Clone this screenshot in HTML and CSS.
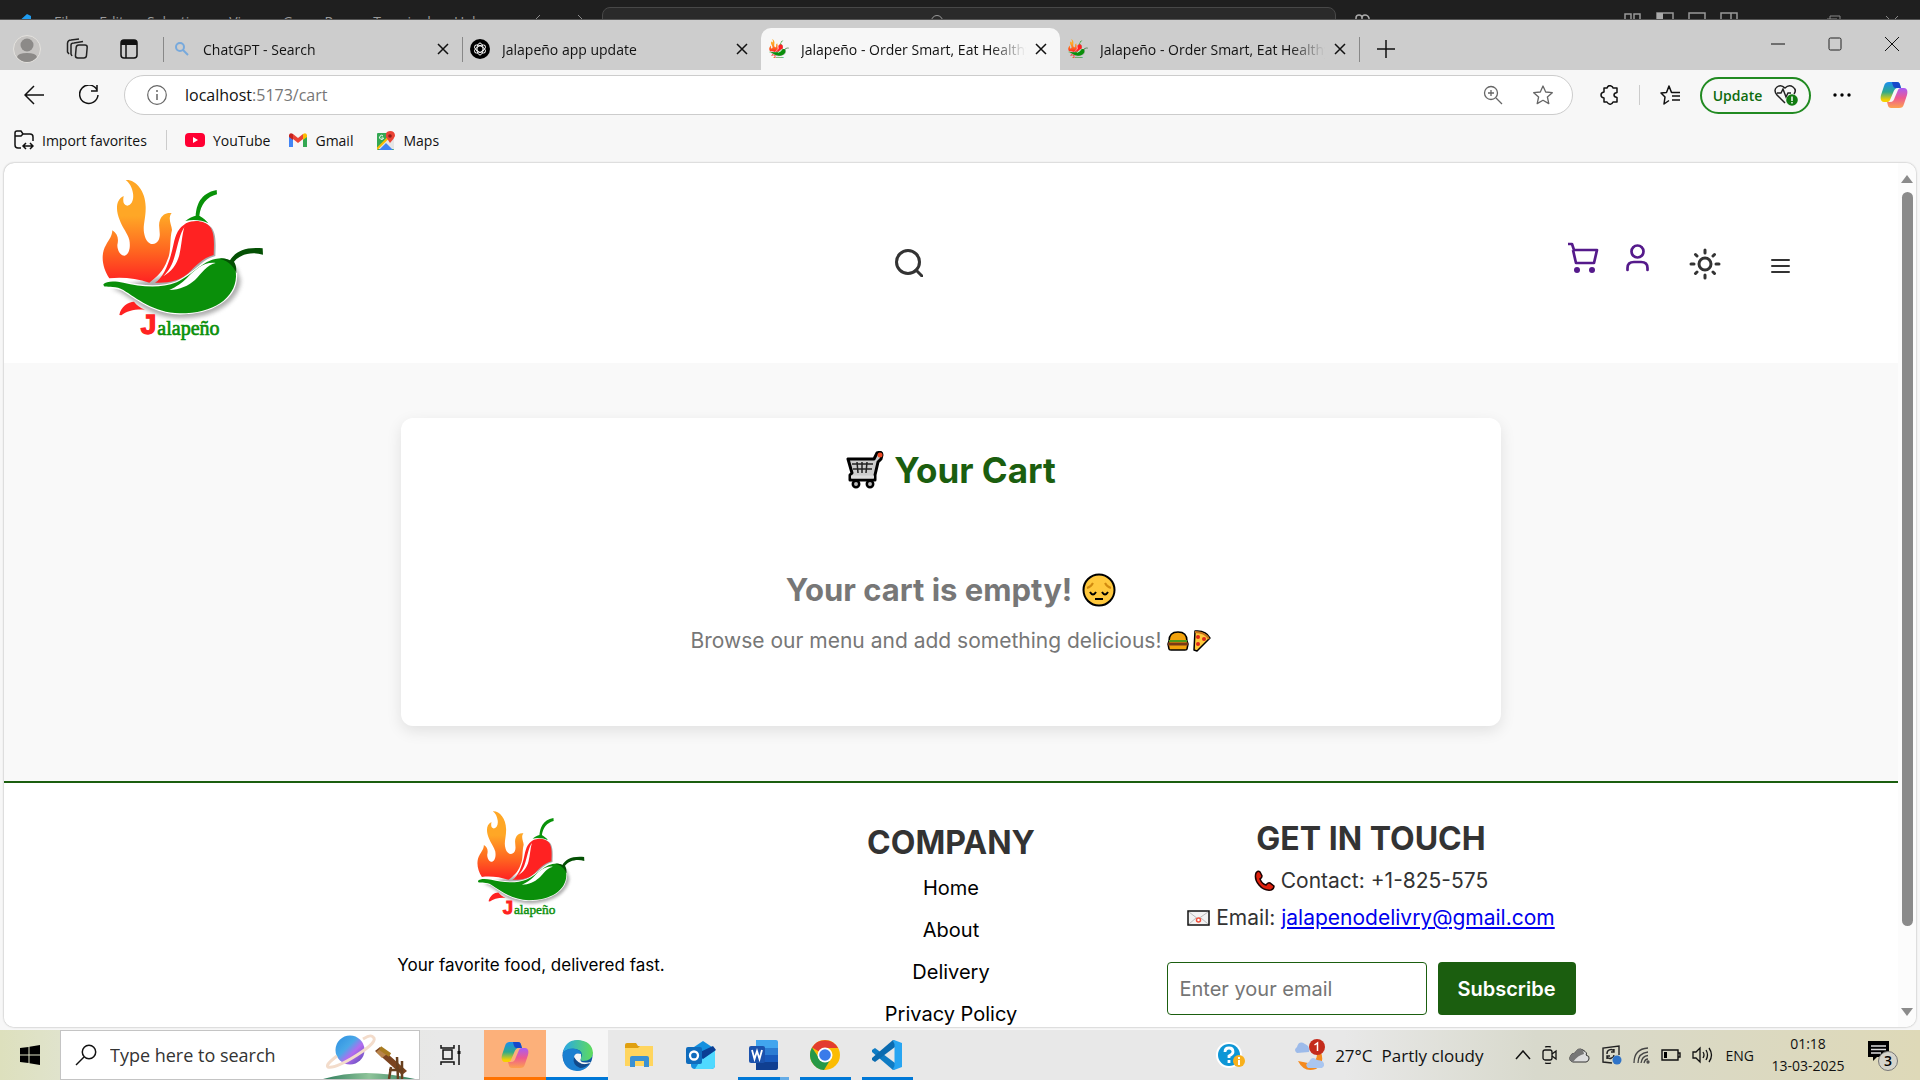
FILE: index.html
```html
<!DOCTYPE html>
<html lang="en">
<head>
<meta charset="utf-8">
<title>Jalapeño - Order Smart, Eat Healthy</title>
<link rel="stylesheet" href="styles.css">
</head>
<body>
<svg class="defs" width="0" height="0" aria-hidden="true">
  <defs>
    <linearGradient id="flame" x1="0" y1="0" x2="0" y2="1"><stop offset="0.35" stop-color="#ffa726"/><stop offset="0.7" stop-color="#ff6420"/><stop offset="1" stop-color="#ff2222"/></linearGradient>
    <filter id="soft" x="-20%" y="-20%" width="140%" height="140%"><feGaussianBlur stdDeviation="6"/></filter>
    <linearGradient id="cpA" x1="0" y1="0" x2="0" y2="1"><stop offset="0" stop-color="#1a8df0"/><stop offset="0.5" stop-color="#2fa98c"/><stop offset="0.9" stop-color="#f5d000"/></linearGradient>
    <linearGradient id="cpB" x1="0" y1="0" x2="0" y2="1"><stop offset="0" stop-color="#a85cf5"/><stop offset="0.5" stop-color="#ee5a90"/><stop offset="1" stop-color="#fda24f"/></linearGradient>
    <linearGradient id="edgeA" x1="0" y1="0" x2="1" y2="0"><stop offset="0" stop-color="#2aa7e8"/><stop offset="1" stop-color="#5fdc5a"/></linearGradient>
    <linearGradient id="planet" x1="0" y1="0" x2="1" y2="1"><stop offset="0" stop-color="#2b8fe0"/><stop offset="0.4" stop-color="#4aa8e8"/><stop offset="0.6" stop-color="#b26cf0"/><stop offset="1" stop-color="#5648b0"/></linearGradient>
    <linearGradient id="hill" x1="0" y1="0" x2="1" y2="0"><stop offset="0" stop-color="#2f7d5c"/><stop offset="0.5" stop-color="#8fc49a"/><stop offset="1" stop-color="#2f7d5c"/></linearGradient>
  </defs>
  <symbol id="logo" viewBox="66 36 486 492">
    <path d="M95 372C150 380 180 455 300 460C410 460 480 405 482 345L470 310L380 300Z" fill="#777" opacity=".6" filter="url(#soft)"/>
    <path d="M137 45C165 42 196 75 197 125C198 165 185 185 195 215C203 240 225 245 236 225C245 205 232 185 240 165C245 150 258 142 275 144C262 160 275 180 276 195C268 225 275 260 262 285C250 320 230 335 208 353C170 340 125 335 88 340C68 310 60 270 78 240C88 222 96 215 97 196C112 205 117 220 112 240C112 258 122 273 134 272C148 268 152 245 148 225C143 205 128 190 119 165C108 140 105 105 131 93C128 110 130 120 142 122C155 120 162 105 159 85C156 68 150 55 137 45Z" fill="url(#flame)"/>
    <path d="M323 178C350 165 380 171 395 188C410 208 407 245 406 273C370 283 350 308 330 328Z" fill="#aaa"/>
    <path d="M318 175C345 162 375 168 390 185C405 205 402 240 401 270C365 280 345 305 325 325C300 348 265 355 225 353C250 340 270 290 280 240C288 205 295 190 318 175Z" fill="#ff2222"/>
    <path d="M313 187C300 205 295 235 285 270C277 300 268 315 250 334C275 318 290 300 298 270C305 240 306 210 313 187Z" fill="#fff"/>
    <path d="M316 168C328 158 338 155 347 152C350 120 360 85 410 75L411 88C380 95 362 120 358 152C370 160 378 165 385 175C365 165 340 163 316 168Z" fill="#099209"/>
    <path d="M118 450C122 425 145 410 162 410C170 420 180 428 195 434C165 432 140 438 124 451Z" fill="#ff2222"/>
    <path d="M70 358C80 347 105 348 130 353C180 365 240 372 290 352C340 330 370 280 425 280C455 282 470 305 468 335C465 400 400 445 300 445C220 443 170 400 130 375C110 363 85 368 72 364Z" fill="#0a8f0a" stroke="#fff" stroke-width="7" paint-order="stroke"/>
    <path d="M407 294C370 290 345 315 320 340C305 355 290 365 268 375C300 375 325 362 345 345C365 325 380 300 407 294Z" fill="#fff"/>
    <path d="M418 282C435 278 445 284 450 286C465 262 490 245 548 250L549 269C515 258 480 268 462 290C468 300 470 310 469 325C460 300 440 285 418 282Z" fill="#045004"/>
    <text x="182" y="507" class="logo-j">J</text>
    <text x="232" y="509" class="logo-rest">alapeño</text>
  </symbol>
  <symbol id="x" viewBox="0 0 12 12"><path d="M1 1L11 11M11 1L1 11" stroke="#111" stroke-width="1.5" fill="none"/></symbol>
  <symbol id="copilot" viewBox="0 0 28 28">
    <path d="M9 1H17C20 1 20 4 21 7H18C15 7 14 9 13 12L10 19C9 21 8 21 6 21H4C1 21 0 18 1 14L4 5C5 2 6 1 9 1Z" fill="url(#cpA)"/>
    <path d="M12 1H17C20 1 20 4 21 7H16C14 7 13 6 12 1Z" fill="#1747c9"/>
    <path d="M19 27H11C8 27 8 24 7 21H10C13 21 14 19 15 16L18 9C19 7 20 7 22 7H24C27 7 28 10 27 14L24 23C23 26 22 27 19 27Z" fill="url(#cpB)"/>
  </symbol>
</svg>

<div class="editor">
  <svg width="20" height="20" viewBox="0 0 20 20"><path d="M15 0L19 2V18L15 20L5 11L2 14L0 13V7L2 6L5 9Z" fill="#1f9cf0"/></svg>
  <nav class="editor-menu"><span>File</span><span>Edit</span><span>Selection</span><span>View</span><span>Go</span><span>Run</span><span>Terminal</span><span>Help</span></nav>
  <svg class="editor-nav" width="54" height="14" viewBox="0 0 54 14"><path d="M8 1L2 7L8 13M2 7H16M46 1L52 7L46 13M52 7H38" stroke="#8a8a8a" fill="none"/></svg>
  <div class="editor-search"><svg width="14" height="14" viewBox="0 0 14 14"><circle cx="7" cy="6" r="5.500" fill="none" stroke="#999"/></svg><span>jalapeno</span></div>
  <svg class="editor-copilot" width="34" height="14" viewBox="0 0 34 14"><path d="M2 9V4Q2 1 5 1T8 4V7M8 7V4Q8 1 11 1T15 4V9M26 7L30 11L34 7" stroke="#aaa" stroke-width="1.500" fill="none"/></svg>
  <svg class="editor-layout" width="116" height="16" viewBox="0 0 116 16"><path d="M1 2H7V9H1ZM10 2H16V9H10ZM33 1H49V14H33ZM65 1H81V14H65ZM97 1H113V14H97ZM107 1V14" stroke="#999" fill="none" stroke-width="1.500"/><path d="M33 1H39V14H33Z" fill="#aaa"/></svg>
  <svg class="editor-window" width="74" height="14" viewBox="0 0 74 14"><path d="M1 14V5H11V14M4 5V2H14V12M60 2L72 14M72 2L60 14" stroke="#888" fill="none"/></svg>
</div>

<div class="browser">
  <div class="tabbar">
    <div class="tab-tools">
      <svg width="28" height="28" viewBox="0 0 28 28"><circle cx="14" cy="14" r="13.500" fill="#c6c4c2" stroke="#e4e2de"/><circle cx="14" cy="10" r="6.500" fill="#8c8a88"/><path d="M4 22Q5 18 14 18T24 22Q20 27 14 27T4 22Z" fill="#8c8a88"/></svg>
      <svg width="22" height="22" viewBox="0 0 22 22" fill="none" stroke="#222" stroke-width="1.500"><rect x="9" y="7" width="11" height="13" rx="2.500" transform="skewX(-5) translate(2 0)"/><path d="M6 18L5 16V7Q5 5 8 5L17 3.500M3 16L1.500 14V5Q2 2 5 2L13 1"/></svg>
      <svg class="tab-panel" width="18" height="20" viewBox="0 0 18 20"><rect x="1" y="1" width="16" height="18" rx="3" fill="none" stroke="#111" stroke-width="1.500"/><path d="M1 6V4Q1 1 4 1H14Q17 1 17 4V6Z" fill="#111"/><path d="M6 6V19" stroke="#111" stroke-width="1.500"/></svg>
    </div>
    <div class="tab tab-line">
      <svg class="fav" width="20" height="20" viewBox="0 0 20 20"><circle cx="9" cy="8" r="4" fill="none" stroke="#77a9dc" stroke-width="2"/><path d="M12 11L17 16" stroke="#77a9dc" stroke-width="2"/></svg>
      <span class="tab-title">ChatGPT - Search</span><button class="close" aria-label="Close tab"><svg width="12" height="12"><use href="#x"/></svg></button>
    </div>
    <div class="tab tab-line">
      <svg class="fav" width="20" height="20" viewBox="0 0 20 20"><circle cx="10" cy="10" r="10" fill="#000"/><g fill="none" stroke="#fff"><ellipse cx="10" cy="10" rx="3" ry="6"/><ellipse cx="10" cy="10" rx="3" ry="6" transform="rotate(60 10 10)"/><ellipse cx="10" cy="10" rx="3" ry="6" transform="rotate(120 10 10)"/></g></svg>
      <span class="tab-title">Jalapeño app update</span><button class="close" aria-label="Close tab"><svg width="12" height="12"><use href="#x"/></svg></button>
    </div>
    <div class="tab tab-active">
      <svg class="fav" width="20" height="20"><use href="#logo"/></svg>
      <span class="tab-title">Jalapeño - Order Smart, Eat Healthy</span><button class="close" aria-label="Close tab"><svg width="12" height="12"><use href="#x"/></svg></button>
    </div>
    <div class="tab">
      <svg class="fav" width="20" height="20"><use href="#logo"/></svg>
      <span class="tab-title">Jalapeño - Order Smart, Eat Healthy</span><button class="close" aria-label="Close tab"><svg width="12" height="12"><use href="#x"/></svg></button>
    </div>
    <button class="new-tab" aria-label="New tab"><svg width="18" height="18" viewBox="0 0 18 18"><path d="M9 0V18M0 9H18" stroke="#111" stroke-width="1.500"/></svg></button>
    <div class="window-buttons">
      <button aria-label="Minimize"><svg width="14" height="14" viewBox="0 0 14 14"><path d="M0 7H14" stroke="#111"/></svg></button>
      <button aria-label="Maximize"><svg width="14" height="14" viewBox="0 0 14 14"><rect x="1" y="1" width="12" height="12" rx="1.500" fill="none" stroke="#222"/></svg></button>
      <button aria-label="Close"><svg width="14" height="14" viewBox="0 0 14 14"><path d="M0 0L14 14M14 0L0 14" stroke="#111"/></svg></button>
    </div>
  </div>

  <div class="toolbar">
    <button aria-label="Back"><svg width="20" height="20" viewBox="0 0 20 20"><path d="M10 1L1 10L10 19M1 10H20" fill="none" stroke="#111" stroke-width="1.500"/></svg></button>
    <button class="reload" aria-label="Reload"><svg width="20" height="20" viewBox="0 0 20 20"><path d="M18 5A9.200 9.200 0 1 0 19 10M18 0V6H12" fill="none" stroke="#111" stroke-width="1.500"/></svg></button>
    <div class="address">
      <svg width="20" height="20" viewBox="0 0 20 20"><circle cx="10" cy="10" r="9.300" fill="none" stroke="#666" stroke-width="1.200"/><path d="M10 9V15M10 5V7" stroke="#666" stroke-width="1.500"/></svg>
      <span class="url">localhost<span>:5173/cart</span></span>
      <svg width="20" height="20" viewBox="0 0 20 20" fill="none" stroke="#666" stroke-width="1.300"><circle cx="8" cy="8" r="6.500"/><path d="M13 13L19 19M8 5V11M5 8H11"/></svg>
      <svg class="star" width="20" height="20" viewBox="0 0 20 20" fill="none" stroke="#666" stroke-width="1.300" stroke-linejoin="round"><path d="M10 1L12.700 7L19.300 7.700L14.400 12L15.800 18.600L10 15.300L4.200 18.600L5.600 12L.7 7.700L7.300 7Z"/></svg>
    </div>
    <svg class="puzzle" width="20" height="20" viewBox="0 0 20 20" fill="none" stroke="#111" stroke-width="1.500" stroke-linejoin="round"><path d="M4 3H7Q8 0 10.500 0.800T13 3H17V7.500Q14 8 14 10T17 12.500V17H13Q12 19.500 10 19.200T7 17H4V13Q1 12.500 1 10T4 7Z"/></svg>
    <i class="rule"></i>
    <svg class="favs" width="20" height="20" viewBox="0 0 20 20" fill="none" stroke="#111" stroke-width="1.500" stroke-linejoin="round"><path d="M17 7.500H11.500L9 1L6.500 7.500L1 8L5 12L4 19L9 15.500M12 11H20M12 15H20M15 7.500H20"/></svg>
    <button class="update">Update <svg width="24" height="22" viewBox="0 0 24 22"><path d="M11 19L3 11Q-1 6 3 3Q7 0 11 4Q15 0 19 3Q23 6 20 10M3 9H7L9 5L12 13L14 9H17" fill="none" stroke="#222" stroke-width="1.500"/><circle cx="18" cy="16" r="5.800" fill="#107c10"/><path d="M18 12.500V17M18 18V19.500" stroke="#fff" stroke-width="1.500"/></svg></button>
    <button class="dots" aria-label="More"><svg width="18" height="4" viewBox="0 0 18 4"><circle cx="2" cy="2" r="1.700"/><circle cx="9" cy="2" r="1.700"/><circle cx="16" cy="2" r="1.700"/></svg></button>
    <button aria-label="Copilot"><svg width="28" height="28"><use href="#copilot"/></svg></button>
  </div>

  <div class="bookmarks">
    <a href="#"><svg width="20" height="20" viewBox="0 0 20 20" fill="none" stroke="#111" stroke-width="1.500"><path d="M7 18H4Q1 18 1 15V3Q1 1 3 1H7L9 4H16Q19 4 19 7V11M1 6H7L9 4M9 16H19M12 13L9 16L12 19M16 13L19 16L16 19"/></svg>Import favorites</a>
    <i class="rule"></i>
    <a href="#"><svg width="20" height="14" viewBox="0 0 20 14"><rect width="20" height="14" rx="4" fill="#ff0033"/><path d="M8 4L13 7L8 10Z" fill="#fff"/></svg>YouTube</a>
    <a href="#"><svg width="18" height="14" viewBox="0 0 18 14"><path d="M0 2V14H4V6Z" fill="#4285f4"/><path d="M18 2V14H14V6Z" fill="#34a853"/><path d="M4 1L9 5L14 1V6L9 10L4 6Z" fill="#ea4335"/><path d="M0 2Q1-1 4 1V7L0 4Z" fill="#c5221f"/><path d="M18 2Q17-1 14 1V7L18 4Z" fill="#fbbc04"/></svg>Gmail</a>
    <a href="#" class="maps"><svg width="18" height="19" viewBox="0 0 18 19"><rect y="2" width="17" height="17" rx="1" fill="#34a853"/><path d="M0 18L16 3L17 4V18Z" fill="#e6e6e6"/><path d="M2 19L9 12L16 19Z" fill="#4285f4"/><path d="M0 18L16 2" stroke="#fbbc04" stroke-width="2"/><path d="M6 5A2 2 0 1 0 6.500 7H4.500" fill="none" stroke="#fff"/><path d="M13 12L9 6Q8 0 13 0T18 5Q17 8 13 12Z" fill="#ea4335"/><circle cx="13" cy="5" r="1.800" fill="#8c1d18"/></svg>Maps</a>
  </div>

  <div class="viewport">
    <div class="page">
      <header class="site-header">
        <a href="#" aria-label="Jalapeño"><svg class="logo" width="162" height="164"><use href="#logo"/></svg></a>
        <button class="search" aria-label="Search"><svg width="28" height="28" viewBox="0 0 28 28" fill="none" stroke="#333" stroke-width="3"><circle cx="13" cy="13" r="11.500"/><path d="M21 21L27 27" stroke-linecap="round"/></svg></button>
        <nav class="actions">
          <a href="#" aria-label="Cart"><svg width="31" height="32" viewBox="0 0 31 32" fill="none" stroke="#551a8b" stroke-width="2.700" stroke-linejoin="round"><path d="M0 2H4L6 8H29L26 21H8L5 8"/><g fill="#551a8b" stroke="none"><circle cx="9" cy="28" r="3"/><circle cx="24" cy="28" r="3"/></g></svg></a>
          <a href="#" aria-label="Account"><svg width="23" height="28" viewBox="0 0 23 28" fill="none" stroke="#551a8b" stroke-width="2.700" stroke-linecap="round"><circle cx="11.500" cy="7.500" r="6"/><path d="M1.500 26V24Q1.500 18 8 18H15Q21.500 18 21.500 24V26"/></svg></a>
          <button class="theme" aria-label="Theme"><svg width="32" height="32" viewBox="0 0 32 32" fill="none" stroke="#333" stroke-width="3" stroke-linecap="round"><circle cx="16" cy="16" r="6"/><path d="M16 2V5M16 27V30M2 16H5M27 16H30M6.500 6.500L8 8M24 24L25.500 25.500M6.500 25.500L8 24M24 8L25.500 6.500"/></svg></button>
          <button class="menu" aria-label="Menu"><svg width="19" height="16" viewBox="0 0 19 16"><path d="M1 2H18M1 8H18M1 14H18" stroke="#333" stroke-width="2" stroke-linecap="round"/></svg></button>
        </nav>
      </header>

      <main>
        <section class="card">
          <h1><svg width="38" height="38" viewBox="0 0 38 38"><path d="M2 8H28L31 2Q36 0 36 4L35 8L32 11L29 24H29V29H4V24L6 22Z" fill="#ccc" stroke="#000" stroke-width="3" stroke-linejoin="round"/><path d="M6 13H27M7 18H26M11 11L12 22M16 11V22M21 11L20 22" stroke="#222" stroke-width="1.500"/><path d="M5 26H28" stroke="#ddd" stroke-width="3"/><circle cx="34" cy="4" r="2.500" fill="#f04a24"/><g fill="#bbb" stroke="#000" stroke-width="2.500"><circle cx="10" cy="33" r="3.200"/><circle cx="24" cy="33" r="3.200"/></g></svg>Your Cart</h1>
          <h2>Your cart is empty! <svg width="34" height="34" viewBox="0 0 34 34"><circle cx="17" cy="17" r="15.500" fill="#ffc83d" stroke="#000" stroke-width="2"/><path d="M5 15Q9 14 11 10M29 15Q25 14 23 10" fill="none" stroke="#d08a10" stroke-width="2"/><path d="M8 19Q11 24 14 19M20 19Q23 24 26 19M13 26H21" fill="none" stroke="#000" stroke-width="2"/></svg></h2>
          <p>Browse our menu and add something delicious! <svg width="22" height="20" viewBox="0 0 22 20"><path d="M2 10Q2 1 11 1T20 10L21 13L20 18Q20 19 18 19H4Q2 19 2 18L1 13Z" fill="#f2a20c" stroke="#000" stroke-width="1.500"/><path d="M2 10H20" stroke="#4c9a1a" stroke-width="2"/><path d="M1 13H21" stroke="#7a3a14" stroke-width="3"/></svg><svg class="pizza" width="18" height="22" viewBox="0 0 18 22"><path d="M2 1Q13 0 17 8L15 10L4 21L1 20Z" fill="#ffc93c" stroke="#000" stroke-width="1.500" stroke-linejoin="round"/><path d="M2 2Q12 2 16 9" fill="none" stroke="#c9731b" stroke-width="2"/><g fill="#e02818"><circle cx="5" cy="7" r="2"/><circle cx="11" cy="9" r="2"/><circle cx="5" cy="14" r="2"/></g></svg></p>
        </section>
      </main>

      <footer>
        <div class="footer-grid">
          <div class="brand"><svg width="108" height="110"><use href="#logo"/></svg><p>Your favorite food, delivered fast.</p></div>
          <div class="company"><h2>COMPANY</h2><a href="#">Home</a><a href="#">About</a><a href="#">Delivery</a><a href="#">Privacy Policy</a></div>
          <div class="touch">
            <h2>GET IN TOUCH</h2>
            <p><svg width="21" height="21" viewBox="0 0 21 21"><path d="M2 3Q4 0 6 2L8 6Q8 8 6 9Q8 14 12 15Q14 12 16 13L20 16Q20 19 17 20Q10 21 5 15T2 3Z" fill="#e0200c" stroke="#1c0000" stroke-width="1.500"/></svg>Contact: +1-825-575</p>
            <p><svg width="23" height="16" viewBox="0 0 23 16"><rect x="1" y="1" width="21" height="14" fill="#f2f2f2" stroke="#111" stroke-width="1.500"/><path d="M2 2L11 9L21 2M2 14L9 8M21 14L14 8" stroke="#bbb" fill="none"/><circle cx="11.500" cy="10" r="2" fill="#fff" stroke="#f0503c" stroke-width="1.500"/></svg>Email:&nbsp;<a href="#">jalapenodelivry@gmail.com</a></p>
            <form><input type="email" placeholder="Enter your email" aria-label="Email address"><button type="button">Subscribe</button></form>
          </div>
        </div>
      </footer>
    </div>
    <div class="scrollbar" aria-hidden="true"><i class="up"></i><i class="thumb"></i><i class="gap"></i><i class="down"></i></div>
  </div>
</div>

<div class="taskbar">
  <button class="start" aria-label="Start"><svg width="20" height="20" viewBox="0 0 20 20"><path d="M0 3L8.500 2V9.500H0ZM9.500 1.800L20 0V9.500H9.500ZM0 10.500H8.500V18L0 17ZM9.500 10.500H20V20L9.500 18.200Z"/></svg></button>
  <label class="task-search">
    <svg width="22" height="22" viewBox="0 0 22 22"><circle cx="14" cy="8" r="6.700" fill="none" stroke="#111" stroke-width="1.500"/><path d="M9 13L1 21" stroke="#111" stroke-width="1.500"/></svg>
    <input type="text" placeholder="Type here to search" aria-label="Type here to search">
    <svg class="scene" width="96" height="48" viewBox="0 0 96 48"><path d="M0 48Q40 36 92 48Z" fill="url(#hill)"/><circle cx="27" cy="19" r="14.500" fill="url(#planet)"/><path d="M14 25Q2 34 5 36Q12 38 34 24T50 6Q48 3 40 8" fill="none" stroke="#f3dccb" stroke-width="3"/><path d="M52 20L57 16L84 40L79 44Z" fill="#7b4420"/><path d="M53 21L58 17L64 23L59 27Z" fill="#b8834a"/><path d="M57 17L67 24" stroke="#a87b20" stroke-width="4"/><path d="M74 26L75 48M79 30V48M66 48L68 36M66 39H80" stroke="#69401f" stroke-width="2.500"/></svg>
  </label>
  <button class="tile" aria-label="Task view"><svg width="22" height="20" viewBox="0 0 22 20" fill="none" stroke="#111" stroke-width="1.500"><path d="M1 0V3H14V0M1 20V17H14V20M3 5H12V14H3ZM19 0V20"/><path d="M19 6V9" stroke-width="3"/></svg></button>
  <button class="tile orange" aria-label="Copilot"><svg width="28" height="28"><use href="#copilot"/></svg></button>
  <button class="tile current" aria-label="Edge"><svg width="31" height="31" viewBox="0 0 31 31"><circle cx="15.500" cy="15.500" r="15" fill="#0c59a4"/><path d="M1 13Q3 0 16 0Q30 1 31 13Q30 21 21 21Q18 21 19 18Q22 11 14 9Q5 8 1 13Z" fill="url(#edgeA)"/><path d="M1 13Q6 7 14 9Q20 11 19 15Q13 11 12 18Q12 27 27 25Q22 31 15 31Q0 30 1 13Z" fill="#1b7fd0"/><path d="M19 14Q12 12 12 18Q14 26 27 24L29 22Q16 24 19 18Z" fill="#f5f5f5"/><path d="M12 17Q10 25 18 28Q24 28 28 23Q18 27 12 17Z" fill="#114a8b"/></svg></button>
  <button class="tile" aria-label="Explorer"><svg width="28" height="24" viewBox="0 0 28 24"><path d="M0 2Q0 0 2 0H11L13 3H27V10H0Z" fill="#e0a010"/><path d="M0 5H13L15 3H28V23H0Z" fill="#ffd55e"/><path d="M5 24V15Q5 13 7 13H22Q24 13 24 15V24H19V18H10V24Z" fill="#3a91d4"/></svg></button>
  <button class="tile" aria-label="Outlook"><svg width="30" height="28" viewBox="0 0 30 28"><path d="M5 8L17 0L29 8V24Q29 28 25 28H9Q5 28 5 24Z" fill="#1490df"/><path d="M14 20L29 9V24Q29 28 25 28H9Z" fill="#50d9ff"/><path d="M12 12L27 5L30 9L17 18Z" fill="#0a3f94"/><rect y="6" width="16" height="17" rx="2" fill="#0f6cbd"/><circle cx="8" cy="14.500" r="4" fill="none" stroke="#fff" stroke-width="2.300"/></svg></button>
  <button class="tile running more" aria-label="Word"><svg width="29" height="30" viewBox="0 0 29 30"><path d="M7 0H27Q29 0 29 2V8H7Z" fill="#41a5ee"/><path d="M7 8H29V15H7Z" fill="#2b7cd3"/><path d="M7 15H29V22H7Z" fill="#185abd"/><path d="M7 22H29V28Q29 30 27 30H7Z" fill="#103f91"/><rect y="6" width="16" height="17" rx="2" fill="#1b52ad"/><path d="M3 10L5.500 19L8 11L10.500 19L13 10" fill="none" stroke="#fff" stroke-width="1.800"/></svg></button>
  <button class="tile running" aria-label="Chrome"><svg width="30" height="30" viewBox="0 0 30 30"><circle cx="15" cy="15" r="15" fill="#fbbc04"/><path d="M15 15L2 7.500A15 15 0 0 1 28 8H15Z" fill="#e33b2e"/><path d="M2 7.500A15 15 0 0 0 14 30L21 18.500L15 15L9 18Z" fill="#279847"/><circle cx="15" cy="15" r="7.500" fill="#fff"/><circle cx="15" cy="15" r="5.800" fill="#3a7bea"/></svg></button>
  <button class="tile running" aria-label="Code"><svg width="30" height="30" viewBox="0 0 30 30"><path d="M0 10L3 8L23 23V29L21 30L0 12Z" fill="#0f7cc4"/><path d="M0 20L3 22L23 7V1L21 0L0 18Z" fill="#0a6bb0"/><path d="M22 0L30 3V27L22 30L21 29L22.500 26V4L21 1Z" fill="#27a5f2"/></svg></button>

  <div class="tray">
    <svg width="30" height="30" viewBox="0 0 30 30"><circle cx="13" cy="15" r="13" fill="#fff"/><circle cx="13" cy="15" r="11" fill="#0d96d6"/><path d="M9 12Q9 8 13 8T17 12Q17 14 13 16V18M13 20V23" fill="none" stroke="#fff" stroke-width="2.800"/><circle cx="23" cy="21" r="6" fill="#f8b01c"/><path d="M23 17V19M23 20V25" stroke="#fff" stroke-width="2"/></svg>
    <div class="weather"><svg width="32" height="32" viewBox="0 0 32 32"><path d="M20 8Q28 22 14 24L4 22Q10 34 22 30Q32 24 26 11Z" fill="#f58a1f"/><path d="M3 14Q-1 11 3 8Q5 1 11 5Q16 7 15 13Z" fill="#9dbbea"/><path d="M14 29Q10 25 15 23Q18 16 23 21Q31 21 30 27L28 29Z" fill="#aac6f0"/><circle cx="23" cy="8" r="8" fill="#c42b1c"/><path d="M20.500 6L23.500 4V12" stroke="#fff" stroke-width="1.500" fill="none"/></svg><span>27°C</span><span class="condition">Partly cloudy</span></div>
    <div class="tray-icons">
      <svg width="16" height="10" viewBox="0 0 16 10"><path d="M1 9L8 1L15 9" fill="none" stroke="#111" stroke-width="1.500"/></svg>
      <svg width="16" height="18" viewBox="0 0 16 18" fill="none" stroke="#111" stroke-width="1.300"><rect x="1" y="4" width="9" height="10" rx="2"/><path d="M10 8L14 5V13L10 10M3 1Q6 0 9 1M3 17Q6 18 9 17"/></svg>
      <svg width="21" height="15" viewBox="0 0 21 15"><path d="M4 14Q0 13 1 9T6 5Q9-1 14 2T17 7Q21 8 20 11T17 14Z" fill="#ddd" stroke="#333"/><path d="M4 14Q0 13 1 9T6 5Q9-1 14 2L15 6Q9 7 4 14Z" fill="#777"/></svg>
      <svg width="21" height="20" viewBox="0 0 21 20"><path d="M18 10V1L2 3V17L11 18M13 6A4 4 0 0 0 6 9M13 4V7H10M6 12A4 4 0 0 0 13 10M6 14V11H9" fill="none" stroke="#222" stroke-width="1.400"/><circle cx="16" cy="15" r="4.500" fill="#2f74c8"/></svg>
      <svg width="17" height="17" viewBox="0 0 17 17" fill="none" stroke="#444" stroke-width="1.300"><path d="M1 16Q1 2 15 1M5 16Q5 6 15 5M8 16Q9 9 15 8.500M11 16Q12 12 15 12"/><circle cx="15" cy="15" r="1"/></svg>
      <svg width="20" height="12" viewBox="0 0 20 12"><path d="M1 1H17V11H1ZM17 4H19V8H17" fill="none" stroke="#111" stroke-width="1.400"/><path d="M3 3H6V9H3Z"/></svg>
      <svg width="21" height="18" viewBox="0 0 21 18" fill="none" stroke="#111" stroke-width="1.300"><path d="M1 6H4L8 2V16L4 12H1ZM11 6Q13 9 11 12M14 4Q17 9 14 14M17 2Q22 9 17 16"/></svg>
    </div>
    <span class="lang">ENG</span>
    <div class="clock"><span>01:18</span><span>13-03-2025</span></div>
    <button class="notify" aria-label="Notifications"><svg width="32" height="32" viewBox="0 0 32 32"><path d="M0 2H21V18H9L5 22V18H0Z"/><path d="M3 7H18M3 10.500H18M3 14H13" stroke="#ddd" stroke-width="1.500"/><circle cx="20" cy="22" r="9.500" fill="#d5d4cb" stroke="#777"/><text x="20" y="27" text-anchor="middle">3</text></svg></button>
  </div>
</div>
</body>
</html>
```
FILE: styles.css
```css
* { box-sizing: border-box; }
body {
  margin: 0;
  height: 100vh;
  display: flex;
  flex-direction: column;
  overflow: hidden;
  background: #f7f7f7;
  font-family: "Open Sans", "Noto Sans", sans-serif;
  font-size: 14px;
  color: #111;
}
svg { display: block; flex: none; }
button { border: 0; padding: 0; background: none; font: inherit; color: inherit; display: flex; align-items: center; justify-content: center; }
a { color: inherit; text-decoration: none; }
.defs { position: absolute; }
.logo-j { font: bold 84px "Liberation Sans", sans-serif; fill: #ff2222; stroke: #ff2222; stroke-width: 4px; }
.logo-rest { font: 60px "Liberation Serif", serif; fill: #0a8f0a; stroke: #0a8f0a; stroke-width: 2px; }

/* editor window behind the browser */
.editor { flex: none; height: 20px; overflow: hidden; display: flex; align-items: flex-start; padding: 0 20px 0 12px; background: #1f1f1f; border-bottom: 1px solid #555; color: #9a9a9a; }
.editor > svg { margin-top: 14px; }
.editor-menu { display: flex; gap: 23px; margin: 12px 0 0 22px; line-height: 20px; }
.editor .editor-nav { margin-left: 48px; }
.editor-search { flex: 1; display: flex; justify-content: center; gap: 8px; height: 30px; margin: 7px 18px 0 16px; padding: 7px 0 0; background: #2a2a2a; border: 1px solid #484848; border-radius: 8px; line-height: 20px; }
.editor .editor-layout { margin-left: 236px; margin-top: 12px; }
.editor .editor-window { margin-left: 86px; }

.browser { flex: 1; min-height: 0; display: flex; flex-direction: column; }

/* tabs */
.tabbar { flex: none; height: 50px; display: flex; align-items: flex-end; background: #cdcdcd; }
.tab-tools { width: 163px; height: 42px; padding: 0 25px 0 13px; display: flex; align-items: center; gap: 25px; }
.tab-panel { margin-left: auto; }
.tab { flex: 0 1 299px; min-width: 0; height: 42px; display: flex; align-items: center; padding: 0 12px 0 8px; }
.tab-line { background: linear-gradient(#888, #888) left 9px / 1px 25px no-repeat; }
.tab-active { background: #f7f7f7; border-radius: 10px 10px 0 0; }
.tab-title { flex: 1; min-width: 0; margin: 0 8px 0 12px; overflow: hidden; white-space: nowrap; -webkit-mask-image: linear-gradient(90deg, #000 84%, transparent); mask-image: linear-gradient(90deg, #000 84%, transparent); }
.close { width: 14px; height: 20px; }
.new-tab { width: 54px; height: 42px; background: linear-gradient(#888, #888) left 9px / 1px 25px no-repeat; }
.window-buttons { margin-left: auto; height: 50px; padding-bottom: 2px; display: flex; }
.window-buttons button { width: 57px; }

/* address row */
.toolbar { flex: none; height: 50px; display: flex; align-items: center; padding: 0 12px 0 24px; }
.reload { margin-left: 35px; }
.address { flex: 1; height: 40px; margin: 0 27px 0 25px; padding: 0 19px 0 22px; display: flex; align-items: center; background: #fff; border: 1px solid #ccc; border-radius: 20px; }
.url { flex: 1; margin-left: 18px; font-size: 16px; }
.url span { color: #767676; }
.star { margin-left: 30px; }
.rule { width: 1px; height: 20px; background: #ccc; }
.puzzle { margin-right: 19px; }
.favs { margin: 0 20px; }
.update { width: 111px; height: 37px; gap: 12px; border: 2px solid #218a21; border-radius: 20px; color: #0e6b0e; font-weight: 600; }
.dots { margin: 0 29px 0 22px; }

.bookmarks { flex: none; height: 43px; padding: 0 14px 3px; display: flex; align-items: center; }
.bookmarks a { display: flex; align-items: center; gap: 8px; margin-right: 19px; }
.bookmarks .rule { margin-right: 18px; }
.bookmarks .maps { margin-left: 5px; }

/* page area */
.viewport { flex: 1; min-height: 0; margin: 0 4px 3px; display: flex; overflow: hidden; background: #fff; border-radius: 10px; box-shadow: 0 0 2px #999; }
.page { flex: 1; min-width: 0; font-family: Inter, "Open Sans", sans-serif; font-size: 20px; }
.scrollbar { width: 18px; padding: 12px 0 11px; display: flex; flex-direction: column; align-items: center; background: #fcfcfc; }
.up, .down { border: 6px solid transparent; }
.up { border-top: 0; border-bottom: 8px solid #8b8b8b; }
.down { border-bottom: 0; border-top: 8px solid #8b8b8b; }
.thumb { flex: 9; width: 11px; margin-top: 9px; border-radius: 6px; background: #8b8b8b; }
.gap { flex: 1; }

.site-header { height: 200px; padding: 0 108px 8px 98px; display: flex; align-items: center; justify-content: space-between; }
.search { padding: 8px 14px 0 0; }
.actions { display: flex; align-items: center; padding-top: 10px; }
.actions a { padding-bottom: 12px; margin-right: 27px; }
.theme { margin: 0 50px 0 13px; }
.menu { padding-top: 3px; }

main { padding: 55px 24px; background: #f9f9f9; }
.card { max-width: 1100px; margin: 0 auto; padding: 32px 30px 70px; background: #fff; border-radius: 12px; box-shadow: 0 5px 15px rgba(0, 0, 0, .1); text-align: center; }
.card h1, .card h2, .card p { display: flex; align-items: center; justify-content: center; margin: 0; }
.card h1 { margin-bottom: 80px; gap: 10px; font-size: 35px; line-height: 40px; color: #1b5e0f; }
.card h2 { margin-bottom: 16px; gap: 10px; font-size: 31px; line-height: 40px; color: #777; }
.card p { gap: 6px; line-height: 30px; color: #777; }
.card p, .touch p { font-size: 21px; }
.card .pizza { margin-left: -2px; }

footer { border-top: 2px solid #1b5e0f; padding-top: 26px; background: #fff; }
.footer-grid { max-width: 1260px; margin: 0 auto; display: grid; grid-template-columns: repeat(3, 1fr); text-align: center; }
footer h2 { margin: 0; font-size: 32px; line-height: 40px; color: #333; }
.brand { display: flex; flex-direction: column; align-items: center; }
.brand p { margin: 34px 0 0; font-size: 17px; line-height: 24px; color: #000; }
.company { display: flex; flex-direction: column; padding-top: 14px; }
.company h2 { margin-bottom: 4px; }
.company a { line-height: 42px; color: #000; }
.touch { padding-top: 10px; color: #333; }
.touch h2 { margin-bottom: 3px; }
.touch p { margin: 0; display: flex; align-items: center; justify-content: center; line-height: 37px; }
.touch p svg { margin-right: 6px; }
.touch p a { color: #0000ee; text-decoration: underline; }
.touch form { display: flex; justify-content: center; gap: 11px; margin-top: 26px; }
.touch input { width: 260px; height: 53px; padding: 0 12px; border: 1px solid #1b5e0f; border-radius: 4px; font: inherit; }
.touch input::placeholder { color: #757575; }
.touch form button { width: 138px; height: 53px; border-radius: 4px; background: #1b5e0f; color: #fff; font-weight: 600; }

/* taskbar */
.taskbar { flex: none; height: 50px; display: flex; background: linear-gradient(90deg, #dde0bd 0, #e0e3cc 60px, #e8e8e8 440px, #e8e8e8 70%, #d8d9cc 80%, #ded9b8 100%); }
.start { width: 60px; }
.task-search { width: 360px; display: flex; align-items: center; padding-left: 14px; background: #fff; border: 1px solid #c4c4c4; }
.task-search input { flex: 1; min-width: 0; margin-left: 13px; padding: 0; border: 0; outline: 0; background: none; font: 18px "Open Sans", sans-serif; }
.task-search input::placeholder { color: #333; opacity: 1; }
.tile { width: 62px; border: 0 solid transparent; border-width: 3px 0; }
.orange { margin-left: 2px; background: #fcb07a; border-color: #fcb07a; border-bottom-color: #ff7200; }
.current { background: #f6f6f6; border-color: #f6f6f6; border-bottom-color: #0078d7; }
.running { background: linear-gradient(#0078d7, #0078d7) center bottom / 51px 3px no-repeat border-box; }
.more { background: linear-gradient(90deg, #0078d7 42px, #65ace6 42px) center bottom / 51px 3px no-repeat border-box; }
.tray { margin-left: auto; padding-right: 20px; display: flex; align-items: center; }
.weather { display: flex; align-items: center; gap: 9px; margin: 0 31px 0 48px; font-size: 17px; }
.tray-icons { display: flex; align-items: center; gap: 11px; }
.lang { margin: 0 16px 0 13px; }
.clock { width: 76px; display: flex; flex-direction: column; align-items: center; line-height: 22px; }
.notify { margin-left: 22px; }
.notify text { font: 600 14px "Open Sans", sans-serif; }
```
